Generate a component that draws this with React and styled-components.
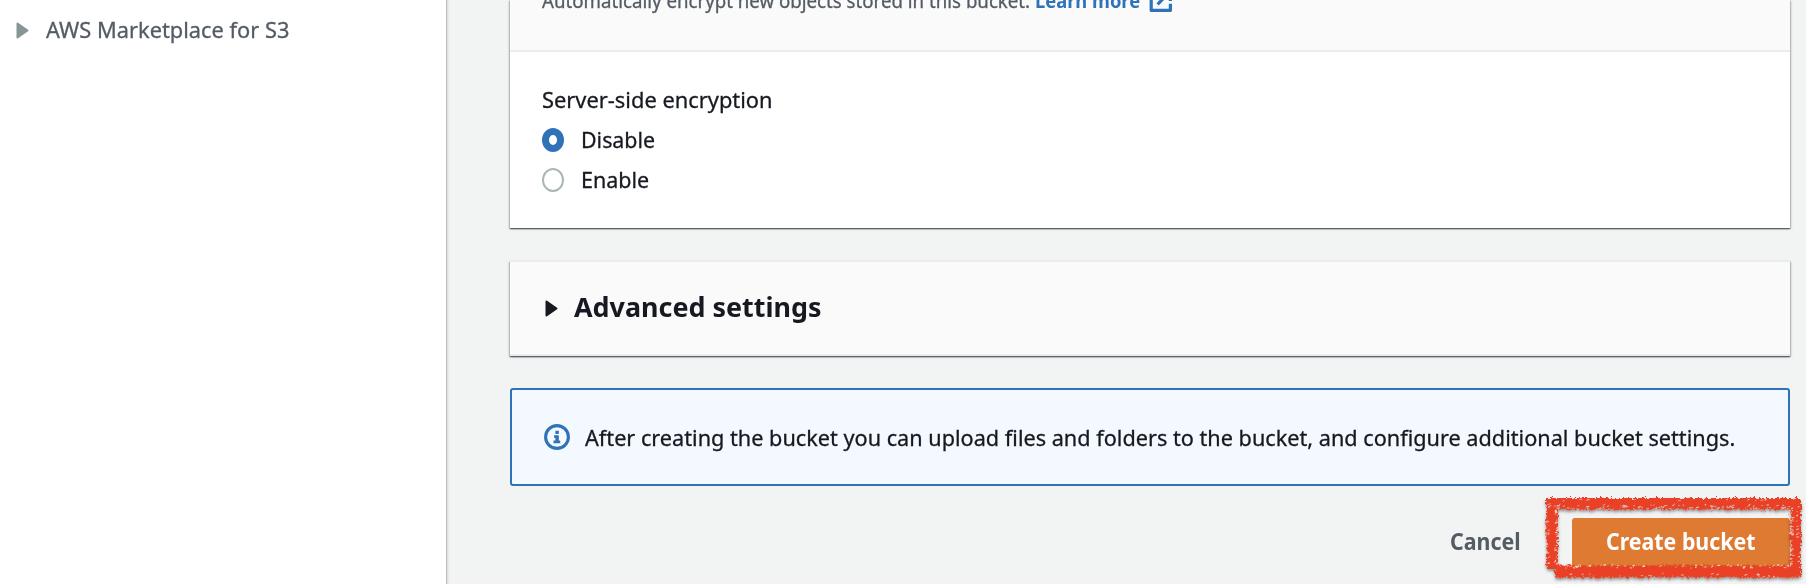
import React from "react";
import styled, { createGlobalStyle } from "styled-components";

const GlobalStyle = createGlobalStyle`
  * { box-sizing: border-box; }
  body { margin: 0; background: #f2f3f3; overflow: hidden; }
  svg { flex: none; }
`;

const Page = styled.div`
  display: flex;
  width: 1806px;
  height: 584px;
  overflow: hidden;
  background: #f2f3f3;
  color: #16191f;
  font-family: "Noto Sans", "Open Sans", sans-serif;
  font-size: 22.4px;
  line-height: 40px;
`;

const Sidebar = styled.nav`
  flex: none;
  width: 447px;
  background: #fff;
  border-right: 1px solid #b9c0c4;
  box-shadow: 1px 0 2px rgba(0, 28, 36, 0.12);
  padding: 10px 0 0 16px;
`;

const NavItem = styled.div`
  display: flex;
  align-items: center;
  gap: 17px;
  color: #545b64;
`;

const Content = styled.main`
  flex: none;
  width: 1280px;
  margin-left: 63px;
  display: flex;
  flex-direction: column;
`;

const Text = styled.span`
  display: inline-block;
  flex: none;
  white-space: nowrap;
  transform: scaleX(${(p) => p.$stretch || 1});
  transform-origin: left center;
  font-weight: ${(p) => (p.$bold ? 700 : 400)};
  -webkit-text-stroke: ${(p) => (p.$bold ? 0 : "0.3px")} currentColor;
`;

const Panel = styled.section`
  flex: none;
  background: #fff;
  box-shadow: 0 1px 1px 0 rgba(0, 28, 36, 0.5), 1px 1px 2px 0 rgba(0, 28, 36, 0.25),
    -1px 1px 2px 0 rgba(0, 28, 36, 0.25);
`;

const PanelHeader = styled.header`
  display: flex;
  align-items: flex-end;
  height: 52px;
  padding: 0 32px 39px;
  background: #fafafa;
  border-bottom: 2px solid #eaeded;
  color: #545b64;
  font-size: 19.2px;
  line-height: 21px;
`;

const LearnMore = styled.a`
  display: flex;
  align-items: flex-end;
  gap: 3px;
  height: 21px;
  margin-left: -9px;
  color: #2e73b8;
`;

const ExternalIcon = styled.svg`
  margin-bottom: -3px;
`;

const PanelBody = styled.div`
  height: 176px;
  padding: 28px 32px;
`;

const Option = styled.label`
  display: flex;
  align-items: center;
  gap: 17px;
  height: 40px;
`;

const Radio = styled.span`
  width: 22px;
  height: 24px;
  border-radius: 50%;
  background: #fff;
  border: ${(p) => (p.$on ? "7px solid #3072b8" : "2px solid #aab7b8")};
`;

const Expander = styled(Panel)`
  display: flex;
  align-items: center;
  gap: 16px;
  height: 95px;
  margin-top: 33px;
  padding: 0 35px;
  background: #fafafa;
  border-top: 1px solid #eaeded;
  border-bottom: 2px solid #eaeded;
  font-size: 27.5px;
  line-height: 38px;

  ${Text} {
    padding-bottom: 2px;
  }
`;

const Info = styled.div`
  flex: none;
  display: flex;
  align-items: center;
  height: 98px;
  margin-top: 32px;
  padding: 0 32px;
  gap: 15px;
  background: #f3f9fe;
  border: 2px solid #3072b8;
  border-radius: 3px;
  line-height: 42px;

  ${Text} {
    padding-top: 1px;
  }
`;

const Actions = styled.footer`
  display: flex;
  justify-content: flex-end;
  margin-top: 32px;
  height: 50px;
  line-height: 48px;
`;

const Cancel = styled.div`
  width: 122px;
  color: #545b64;
`;

const Create = styled.div`
  position: relative;
  width: 218px;
  height: 50px;
  padding-left: 34px;
  border-radius: 3px;
  background: #de7a32;
  color: #fff;
`;

const Marker = styled.svg`
  position: absolute;
  left: -32px;
  top: -28px;
  overflow: visible;
  pointer-events: none;
`;

function Caret({ color }) {
  return (
    <svg width="13" height="17" viewBox="0 0 13 17">
      <path d="M1.5 1.5 L11.5 8.5 L1.5 15.5 Z" fill={color} stroke={color} strokeWidth="2" strokeLinejoin="round" />
    </svg>
  );
}

function External() {
  return (
    <ExternalIcon width="25.6" height="25.6" viewBox="0 0 16 16" fill="none" stroke="currentColor" strokeWidth="2">
      <path d="M9 2H14V8.2 M14 2L6 10.2" />
      <path d="M7 2H2V14H14V9.8" strokeLinejoin="round" />
    </ExternalIcon>
  );
}

function InfoIcon() {
  return (
    <svg width="26" height="26" viewBox="0 0 26 26">
      <circle cx="13" cy="13" r="11.4" fill="none" stroke="#3072b8" strokeWidth="3.1" />
      <path d="M11.4 6.8H14.8V10H11.4Z M10 11.3H14.8V16.4H16.2V19.2H9.5V16.4H11.4V13.8H10Z" fill="#3072b8" />
    </svg>
  );
}

function random(seed) {
  let s = seed;
  return () => {
    s = (s * 16807) % 2147483647;
    return s / 2147483647;
  };
}

function Brush() {
  const r = random(73);
  const flecks = [];
  const fleck = (x, y, w, h, n, color) => {
    for (let i = 0; i < n; i++) {
      const px = x + r() * w;
      const py = y + r() * h;
      flecks.push(
        <path
          key={flecks.length}
          d={`M${px.toFixed(1)} ${py.toFixed(1)} l${(1 + r() * 2).toFixed(1)} ${(-1.5 + r() * 2).toFixed(1)}`}
          stroke={color}
          strokeWidth={0.6 + r() * 0.7}
        />
      );
    }
  };
  fleck(8, 15, 244, 4, 85, "#d9bdb7");
  fleck(22, 75, 228, 3, 60, "#f3d0bd");
  fleck(8, 9, 246, 2, 12, "#efb6ab");
  fleck(24, 84, 230, 3, 20, "#efb6ab");
  fleck(14, 20, 3, 56, 28, "#f2d6d0");
  fleck(249, 20, 3, 56, 34, "#e6c4bd");
  fleck(6, 10, 2, 70, 14, "#efb6ab");
  fleck(256, 12, 3, 70, 14, "#efb6ab");
  return (
    <Marker width="266" height="94" viewBox="0 0 266 94">
      <defs>
        <filter id="rough" x="-10" y="-10" width="290" height="115" filterUnits="userSpaceOnUse">
          <feTurbulence type="fractalNoise" baseFrequency="0.38" numOctaves="2" seed="8" result="n" />
          <feDisplacementMap in="SourceGraphic" in2="n" scale="6.5" xChannelSelector="R" yChannelSelector="G" />
        </filter>
        <filter id="shade" x="-10" y="-10" width="290" height="115" filterUnits="userSpaceOnUse">
          <feDropShadow dx="0" dy="2" stdDeviation="1.5" floodColor="#000" floodOpacity="0.4" />
        </filter>
      </defs>
      <g filter="url(#shade)">
        <g filter="url(#rough)" fill="#ea4025">
          <path d="M6 8H261V19.5H6Z" />
          <path d="M6 8H18V79H7Z" />
          <path d="M15 75.5H261V87.5H15Z" />
          <path d="M250.500 8H261V86H250.500Z" />
        </g>
      </g>
      <g>{flecks}</g>
    </Marker>
  );
}

export default function App() {
  return (
    <>
      <GlobalStyle />
      <Page>
        <Sidebar>
          <NavItem>
            <Caret color="#879596" />
            <Text $stretch={0.974}>AWS Marketplace for S3</Text>
          </NavItem>
        </Sidebar>
        <Content>
          <Panel>
            <PanelHeader>
              <Text $stretch={0.973}>Automatically encrypt new objects stored in this bucket.</Text>
              <LearnMore>
                <Text $bold $stretch={0.955}>Learn more</Text>
                <External />
              </LearnMore>
            </PanelHeader>
            <PanelBody>
              <Text $stretch={0.976}>Server-side encryption</Text>
              <Option>
                <Radio $on />
                <Text $stretch={0.955}>Disable</Text>
              </Option>
              <Option>
                <Radio />
                <Text $stretch={0.96}>Enable</Text>
              </Option>
            </PanelBody>
          </Panel>
          <Expander>
            <Caret color="#16191f" />
            <Text $bold $stretch={0.978}>Advanced settings</Text>
          </Expander>
          <Info>
            <InfoIcon />
            <Text $stretch={0.968}>
              After creating the bucket you can upload files and folders to the bucket, and configure additional bucket settings.
            </Text>
          </Info>
          <Actions>
            <Cancel>
              <Text $bold $stretch={0.955}>Cancel</Text>
            </Cancel>
            <Create>
              <Text $bold $stretch={0.953}>Create bucket</Text>
              <Brush />
            </Create>
          </Actions>
        </Content>
      </Page>
    </>
  );
}
